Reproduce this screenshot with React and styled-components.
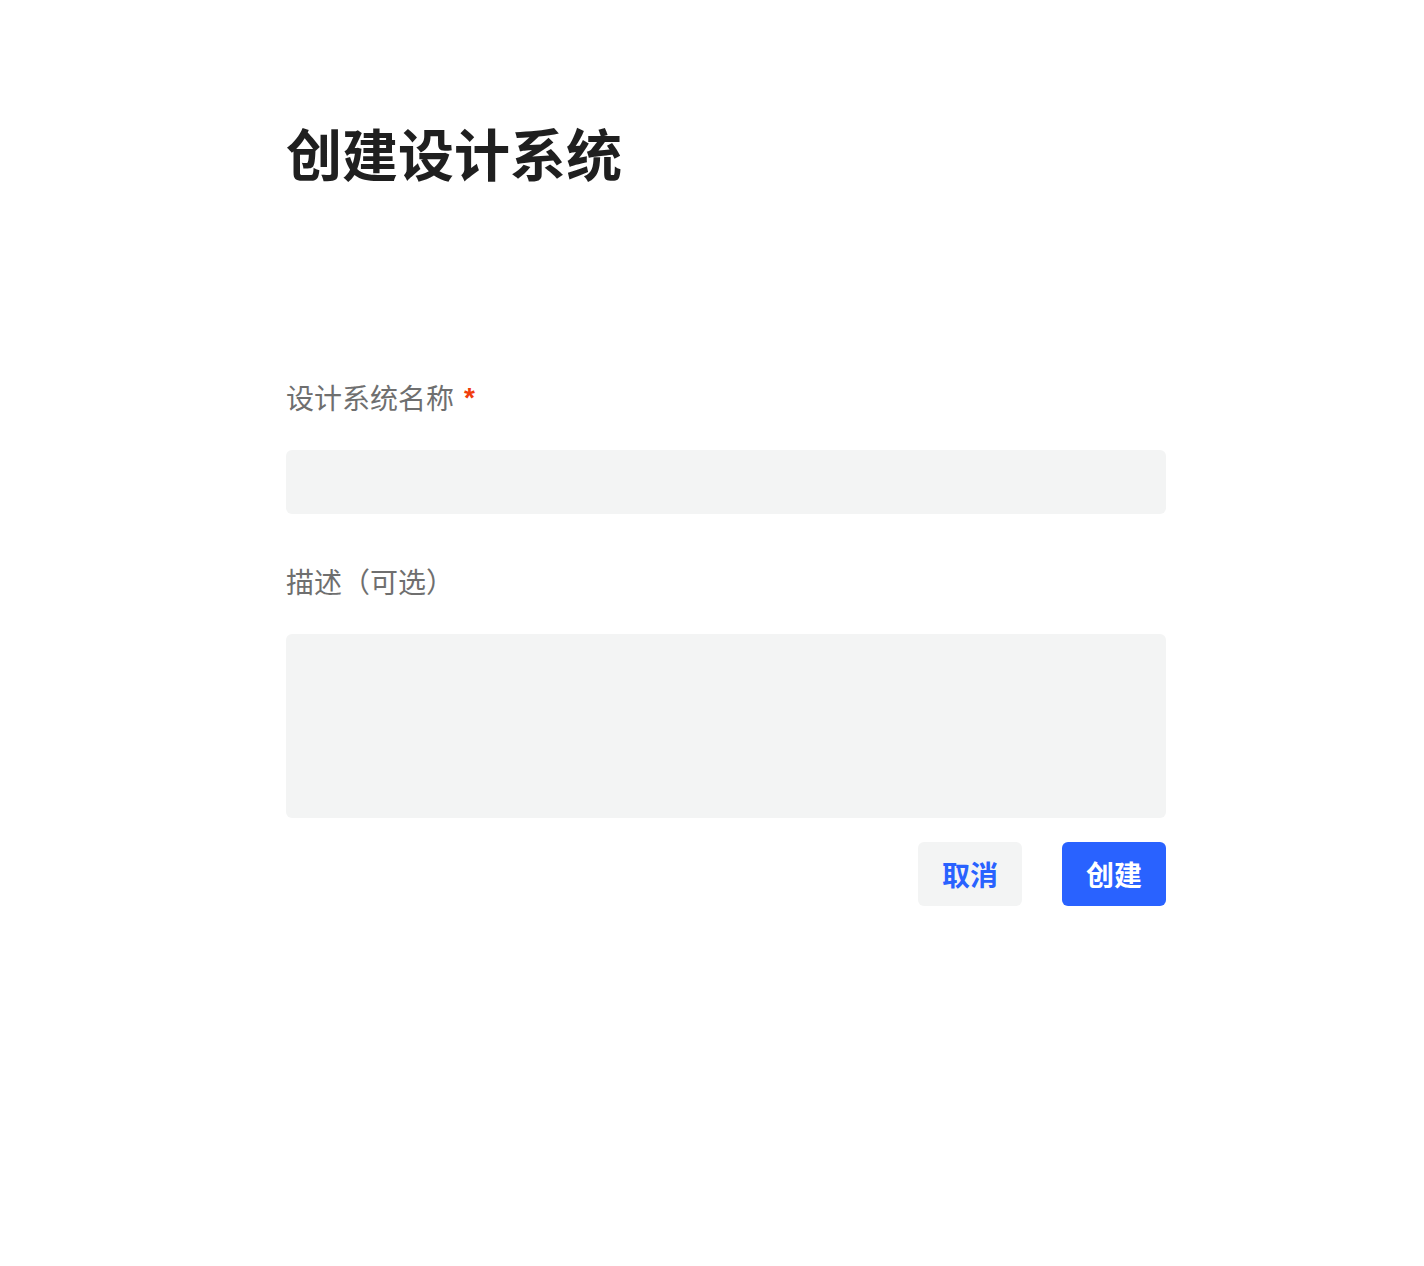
import React from "react";
import styled, { createGlobalStyle } from "styled-components";

const Global = createGlobalStyle`
  html, body { margin: 0; padding: 0; background: #ffffff; }
  body { font-family: "Noto Sans CJK SC", "Noto Sans", sans-serif; }
  * { box-sizing: border-box; }
`;

const Page = styled.div`
  padding: 110px 0 0 286px;
  min-height: 1266px;
`;

const Form = styled.div`
  width: 880px;
  display: flex;
  flex-direction: column;
`;

const Title = styled.h1`
  margin: 0 0 183px;
  font-size: 56px;
  line-height: 84px;
  font-weight: 700;
  color: #1f1f1f;
`;

const Label = styled.div`
  font-size: 28px;
  line-height: 41px;
  color: #6f6f6f;
  margin-bottom: 32px;
  display: flex;
  align-items: center;
`;

const Req = styled.span`
  color: #f03d0c;
  font-weight: 700;
  margin-left: 10px;
  font-family: "Liberation Sans", sans-serif;
  font-size: 28px;
`;

const Field = styled.div`
  height: ${(p) => p.$h}px;
  background: #f3f4f4;
  border-radius: 6px;
  margin-bottom: ${(p) => p.$mb}px;
`;

const Actions = styled.div`
  display: flex;
  justify-content: flex-end;
  gap: 40px;
`;

const Button = styled.button`
  width: 104px;
  height: 64px;
  border: none;
  border-radius: 6px;
  font-family: "Noto Sans CJK SC", sans-serif;
  font-size: 28px;
  font-weight: 700;
  background: ${(p) => (p.$primary ? "#2962ff" : "#f3f4f4")};
  color: ${(p) => (p.$primary ? "#ffffff" : "#2962ff")};
  padding: 0;
`;

export default function App() {
  return (
    <Page>
      <Global />
      <Form>
        <Title>创建设计系统</Title>
        <Label>
          设计系统名称<Req>*</Req>
        </Label>
        <Field $h={64} $mb={47} />
        <Label>描述（可选）</Label>
        <Field $h={184} $mb={24} />
        <Actions>
          <Button>取消</Button>
          <Button $primary>创建</Button>
        </Actions>
      </Form>
    </Page>
  );
}
